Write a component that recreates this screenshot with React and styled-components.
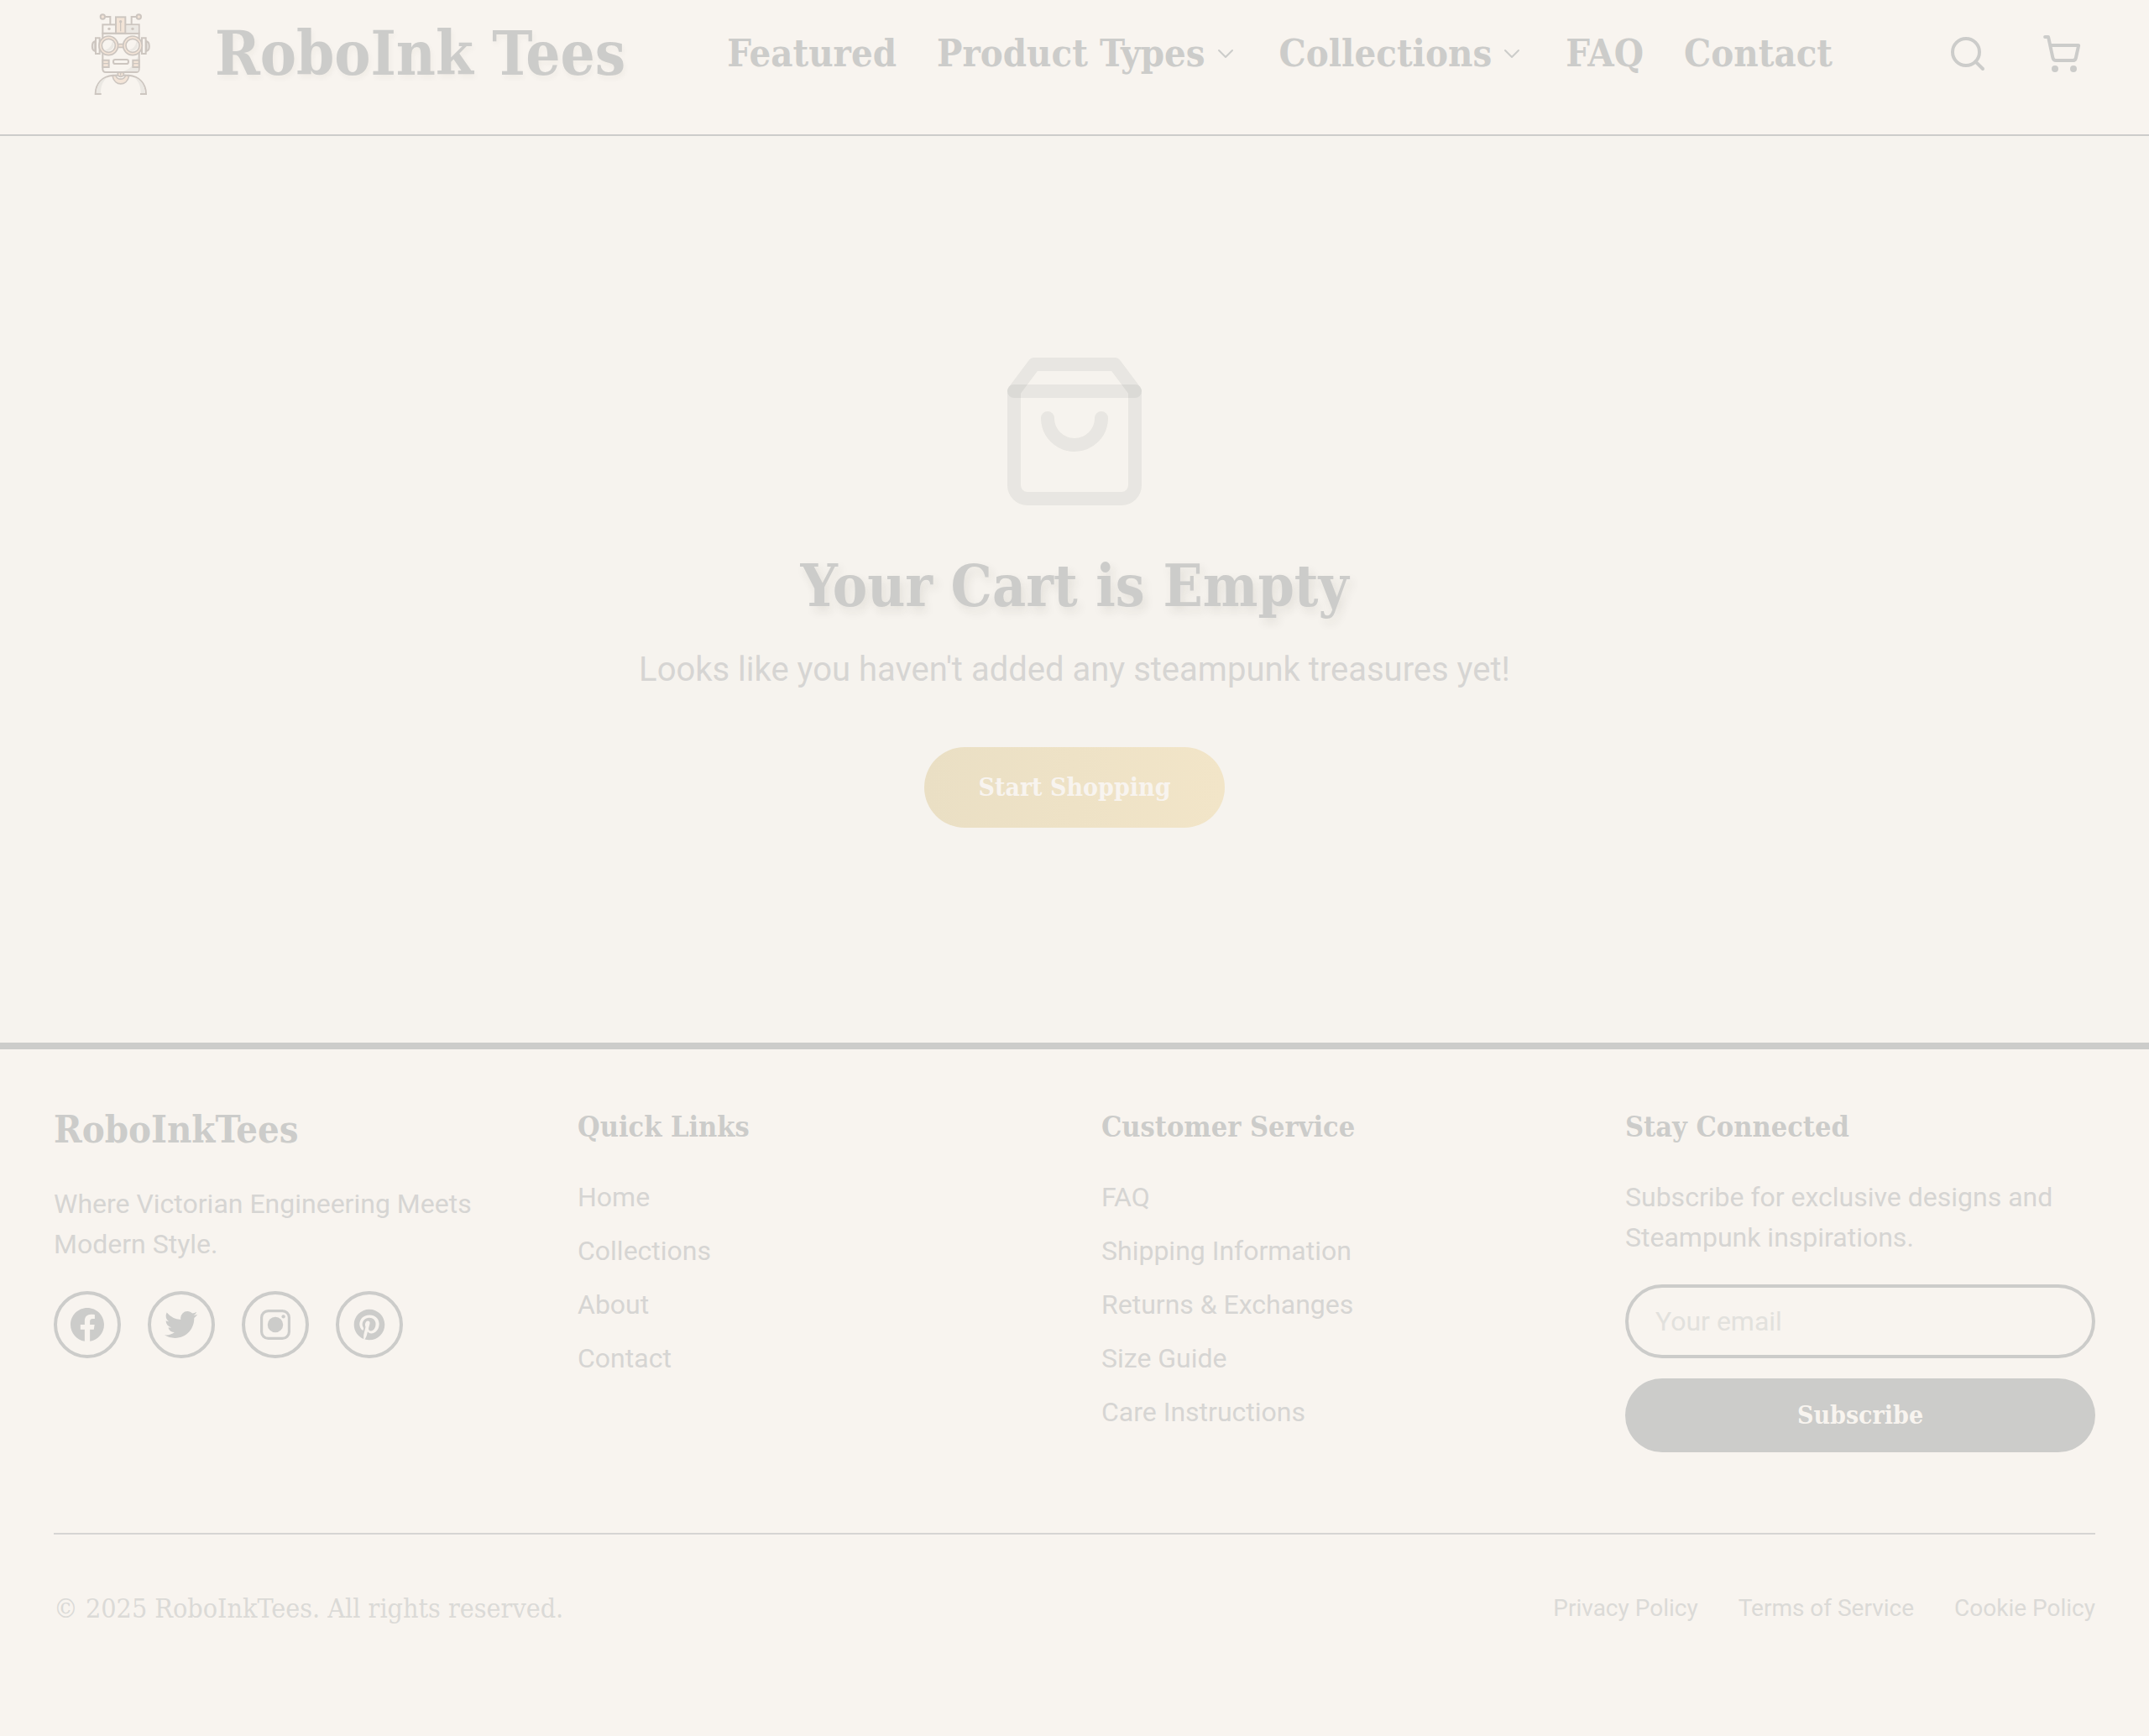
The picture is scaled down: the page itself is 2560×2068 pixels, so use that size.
import React from "react";
import styled, { createGlobalStyle, css } from "styled-components";
import { ChevronDown, Search, ShoppingCart } from "lucide-react";
import { BiLogoFacebookCircle, BiLogoTwitter, BiLogoPinterest } from "react-icons/bi";

const color = {
  paper: "#f8f4ef",
  canvas: "#f6f3ee",
  ink: "#cccccA",
  body: "#d6d5d3",
  faint: "#dbdad7",
  placeholder: "#e2e1dd",
};

const slab = `"Roboto Slab", "DejaVu Serif Condensed", "DejaVu Serif", serif`;
const sans = `Roboto, "Liberation Sans", sans-serif`;

const GlobalStyle = createGlobalStyle`
  *, *::before, *::after { box-sizing: border-box; }
  body {
    margin: 0;
    background: ${color.paper};
    color: ${color.body};
    font: 400 32px/48px ${sans};
  }
  h1, h2, h3, p, ul { margin: 0; padding: 0; }
  ul { list-style: none; }
  a { color: inherit; text-decoration: none; }
  button { border: 0; padding: 0; background: none; color: inherit; cursor: pointer; }
`;

const Page = styled.div`
  display: flex;
  flex-direction: column;
  min-height: 100vh;
`;

const Header = styled.header`
  display: flex;
  align-items: center;
  justify-content: space-between;
  height: 162px;
  padding: 0 64px 32px;
  border-bottom: 2px solid ${color.ink};
  color: ${color.ink};
`;

const Brand = styled.a`
  display: flex;
  align-items: center;
  gap: 32px;
`;

const LogoBox = styled.span`
  display: flex;
  justify-content: center;
  width: 160px;
`;

const BrandName = styled.span`
  font: 700 72px/80px ${slab};
  white-space: nowrap;
  text-shadow: 2px 4px 6px rgba(40, 40, 30, 0.04);
`;

const Nav = styled.nav`
  display: flex;
  align-items: center;
  gap: 48px;
`;

const navItem = css`
  display: flex;
  align-items: center;
  gap: 8px;
  font: 700 45px/64px ${slab};
  white-space: nowrap;
`;

const NavLink = styled.a`
  ${navItem}
`;

const NavButton = styled.button`
  ${navItem}
`;

const Actions = styled.div`
  display: flex;
  gap: 32px;
`;

const IconButton = styled.button`
  display: flex;
  && { padding: 16px; }
`;

const Main = styled.main`
  display: flex;
  flex: 1;
  flex-direction: column;
  align-items: center;
  justify-content: center;
  padding: 64px;
  background: ${color.canvas};
  text-align: center;
`;

const BagIcon = styled.svg`
  width: 192px;
  height: 192px;
  margin-bottom: 48px;
  fill: none;
  stroke: rgba(20, 40, 40, 0.06);
  stroke-width: 2;
  stroke-linecap: round;
  stroke-linejoin: round;
`;

const EmptyTitle = styled.h1`
  margin-bottom: 32px;
  color: ${color.ink};
  font: 700 69px/80px ${slab};
  text-shadow: 4px 6px 12px rgba(40, 40, 30, 0.09);
`;

const EmptyText = styled.p`
  margin-bottom: 64px;
  font-size: 40px;
  line-height: 56px;
`;

const ShopLink = styled.a`
  padding: 24px 64px;
  border-radius: 48px;
  background: linear-gradient(90deg, #eadfc4, #f2e5c8);
  color: ${color.paper};
  font: 700 30px/48px ${slab};
`;

const Footer = styled.footer`
  padding: 64px 64px 128px;
  border-top: 8px solid ${color.ink};
`;

const Columns = styled.div`
  display: grid;
  grid-template-columns: repeat(4, 1fr);
  gap: 64px;
  margin-bottom: 96px;
`;

const FooterBrand = styled.h2`
  margin-bottom: 32px;
  color: ${color.ink};
  font: 700 45px/64px ${slab};
`;

const ColumnTitle = styled.h3`
  margin-bottom: 32px;
  color: ${color.ink};
  font: 700 34px/56px ${slab};
`;

const FooterText = styled.p`
  margin-bottom: 32px;
`;

const LinkList = styled.ul`
  display: grid;
  gap: 16px;
`;

const Socials = styled.div`
  display: flex;
  gap: 32px;
`;

const SocialLink = styled.a`
  display: flex;
  align-items: center;
  justify-content: center;
  width: 80px;
  height: 80px;
  border: 4px solid ${color.ink};
  border-radius: 50%;
  color: ${color.ink};
`;

const Form = styled.form`
  display: grid;
  gap: 24px;
`;

const EmailInput = styled.input`
  width: 100%;
  height: 88px;
  padding: 0 32px;
  border: 4px solid ${color.ink};
  border-radius: 44px;
  background: transparent;
  color: ${color.body};
  font: 400 32px/48px ${sans};
  &::placeholder { color: ${color.placeholder}; opacity: 1; }
`;

const SubscribeButton = styled.button`
  && {
    height: 88px;
    border-radius: 44px;
    background: ${color.ink};
    color: ${color.paper};
    font: 700 30px/48px ${slab};
  }
`;

const Legal = styled.div`
  display: flex;
  align-items: center;
  justify-content: space-between;
  padding-top: 64px;
  border-top: 2px solid ${color.body};
  color: ${color.faint};
`;

const Copyright = styled.p`
  font: 400 32px/48px ${slab};
`;

const LegalLinks = styled.nav`
  display: flex;
  gap: 48px;
  font-size: 28px;
  line-height: 40px;
`;

function RobotLogo() {
  const line = "#cdc6c0";
  const copper = "#f3e4d7";
  const steel = "#ebe8e3";
  return (
    <svg width="72" height="98" viewBox="24 14 216 294" fill="none" stroke={line} strokeWidth="6" aria-hidden="true">
      <path d="M77 29H94V56M186 29H170V56" />
      <circle cx="67" cy="29" r="8" fill={copper} />
      <circle cx="196" cy="29" r="8" fill={copper} />
      <path d="M40 116C26 120 26 148 40 152ZM223 116C237 120 237 148 223 152Z" fill={steel} />
      <path d="M42 105H56V161H42ZM207 105H221V161H207Z" fill={color.paper} />
      <path d="M67 88H197V216Q197 227 186 227H78Q67 227 67 216Z" fill={color.paper} />
      <path d="M194 165V224H140Q180 212 194 165Z" fill={steel} stroke="none" />
      <rect x="67" y="57" width="130" height="31" fill={color.paper} />
      <path d="M151 60H194V85H151Z" fill={steel} stroke="none" />
      <rect x="114" y="30" width="34" height="58" fill={copper} />
      <path d="M131 46V81" strokeWidth="4" />
      <g fill={line} stroke="none">
        <circle cx="131" cy="46" r="5" />
        <circle cx="90" cy="72" r="5" />
        <circle cx="174" cy="72" r="5" />
      </g>
      <path d="M116 127H146V138H116Z" fill={copper} strokeWidth="5" />
      {[88, 174].map((x) => (
        <g key={x} strokeWidth="5">
          <circle cx={x} cy="132" r="34" fill={copper} />
          <circle cx={x} cy="132" r="24" fill={color.paper} />
          <path d={`M${x + 14} 115A22 22 0 0 1 ${x - 14} 148Q${x + 10} 143 ${x + 14} 115Z`} fill={steel} stroke="none" />
        </g>
      ))}
      <rect x="105" y="182" width="54" height="15" rx="7" />
      <path d="M67 184H89V209H67ZM175 184H197V209H175Z" fill={copper} />
      <path d="M67 196H89M175 196H197" strokeWidth="4" />
      <path d="M62 305H41C41 268 66 241 104 238H160C197 241 222 268 222 305H201" />
      <path d="M45 302C46 270 62 252 82 246C66 262 60 280 60 302ZM218 302C217 270 201 252 181 246C197 262 203 280 203 302Z" fill={steel} stroke="none" />
      <path d="M102 241C110 278 153 278 161 241L149 238C143 256 119 256 113 238Z" fill={copper} strokeWidth="5" />
      <path d="M121 228V238Q131 248 142 238V228Z" fill={copper} strokeWidth="5" />
      <path d="M131 229V239" strokeWidth="4" />
    </svg>
  );
}

function InstagramIcon() {
  return (
    <svg width="48" height="48" viewBox="0 0 24 24" fill="currentColor" aria-hidden="true">
      <rect x="3.800" y="3.800" width="16.400" height="16.400" rx="4" fill="none" stroke="currentColor" strokeWidth="1.600" />
      <circle cx="12" cy="12" r="4.620" />
      <circle cx="16.800" cy="7.200" r="1.080" />
    </svg>
  );
}

const navigation = [
  { label: "Featured" },
  { label: "Product Types", menu: true },
  { label: "Collections", menu: true },
  { label: "FAQ" },
  { label: "Contact" },
];

const linkColumns = [
  { title: "Quick Links", links: ["Home", "Collections", "About", "Contact"] },
  {
    title: "Customer Service",
    links: ["FAQ", "Shipping Information", "Returns & Exchanges", "Size Guide", "Care Instructions"],
  },
];

const socials = [
  { name: "Facebook", icon: <BiLogoFacebookCircle size={48} /> },
  { name: "Twitter", icon: <BiLogoTwitter size={48} /> },
  { name: "Instagram", icon: <InstagramIcon /> },
  { name: "Pinterest", icon: <BiLogoPinterest size={44} /> },
];

export default function App() {
  return (
    <Page>
      <GlobalStyle />
      <Header>
        <Brand href="#">
          <LogoBox><RobotLogo /></LogoBox>
          <BrandName>RoboInk Tees</BrandName>
        </Brand>
        <Nav aria-label="Main">
          {navigation.map(({ label, menu }) =>
            menu ? (
              <NavButton key={label} type="button" aria-haspopup="true">
                {label}
                <ChevronDown size={32} strokeWidth={1.5} />
              </NavButton>
            ) : (
              <NavLink key={label} href="#">{label}</NavLink>
            )
          )}
        </Nav>
        <Actions>
          <IconButton type="button" aria-label="Search"><Search size={48} /></IconButton>
          <IconButton type="button" aria-label="Cart"><ShoppingCart size={48} /></IconButton>
        </Actions>
      </Header>

      <Main>
        <BagIcon viewBox="0 0 24 24" aria-hidden="true">
          <path d="M6 2 3 6v14a2 2 0 0 0 2 2h14a2 2 0 0 0 2-2V6l-3-4z" />
          <path d="M3 6h18" />
          <path d="M16 10a4 4 0 0 1-8 0" />
        </BagIcon>
        <EmptyTitle>Your Cart is Empty</EmptyTitle>
        <EmptyText>Looks like you haven't added any steampunk treasures yet!</EmptyText>
        <ShopLink href="#">Start Shopping</ShopLink>
      </Main>

      <Footer>
        <Columns>
          <section>
            <FooterBrand>RoboInkTees</FooterBrand>
            <FooterText>Where Victorian Engineering Meets Modern Style.</FooterText>
            <Socials>
              {socials.map(({ name, icon }) => (
                <SocialLink key={name} href="#" aria-label={name}>{icon}</SocialLink>
              ))}
            </Socials>
          </section>
          {linkColumns.map(({ title, links }) => (
            <section key={title}>
              <ColumnTitle>{title}</ColumnTitle>
              <LinkList>
                {links.map((link) => (
                  <li key={link}><a href="#">{link}</a></li>
                ))}
              </LinkList>
            </section>
          ))}
          <section>
            <ColumnTitle>Stay Connected</ColumnTitle>
            <FooterText>Subscribe for exclusive designs and Steampunk inspirations.</FooterText>
            <Form onSubmit={(event) => event.preventDefault()}>
              <EmailInput type="email" aria-label="Your email" placeholder="Your email" />
              <SubscribeButton type="submit">Subscribe</SubscribeButton>
            </Form>
          </section>
        </Columns>
        <Legal>
          <Copyright>© 2025 RoboInkTees. All rights reserved.</Copyright>
          <LegalLinks aria-label="Legal">
            <a href="#">Privacy Policy</a>
            <a href="#">Terms of Service</a>
            <a href="#">Cookie Policy</a>
          </LegalLinks>
        </Legal>
      </Footer>
    </Page>
  );
}
